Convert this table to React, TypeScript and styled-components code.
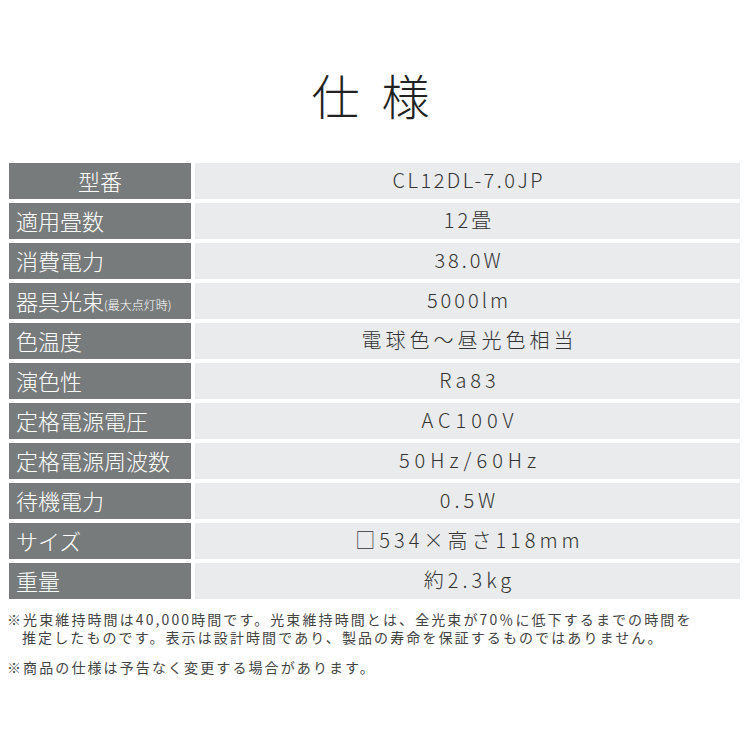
import React from "react";
import styled, { createGlobalStyle } from "styled-components";

const Global = createGlobalStyle`
  html, body { margin: 0; padding: 0; background: #fff; }
  body { font-family: "Noto Sans CJK JP", "Noto Sans", sans-serif; }
`;

const Page = styled.div`
  width: 750px;
  height: 750px;
  box-sizing: border-box;
  padding: 0 10px 0 9px;
  display: flex;
  flex-direction: column;
`;

const Title = styled.h1`
  margin: 0;
  height: 163px;
  box-sizing: border-box;
  padding-top: 62px;
  padding-left: 14px;
  text-align: center;
  font-size: 48px;
  line-height: 64px;
  font-weight: 300;
  letter-spacing: 22px;
  color: #222;
`;

const Table = styled.div`
  display: grid;
  grid-template-columns: 182px 1fr;
  column-gap: 4px;
  row-gap: 4px;
  grid-auto-rows: 36px;
`;

const Label = styled.div<{ $center?: boolean }>`
  background: #787b7c;
  color: #fff;
  font-size: 22px;
  font-weight: 300;
  line-height: 34px;
  padding-bottom: 2px;
  padding-left: ${(p) => (p.$center ? "0" : "7px")};
  text-align: ${(p) => (p.$center ? "center" : "left")};
  white-space: nowrap;
  overflow: hidden;
`;

const Small = styled.span`
  font-size: 12px;
`;

const Value = styled.div<{ $ls: number }>`
  background: #e9ebec;
  color: #333;
  font-size: 20px;
  font-weight: 300;
  line-height: 34px;
  padding-bottom: 2px;
  text-align: center;
  letter-spacing: ${(p) => p.$ls}px;
  padding-left: ${(p) => p.$ls}px;
  white-space: nowrap;
`;

const Notes = styled.div`
  margin-top: 11px;
  color: #444;
  font-size: 14px;
  letter-spacing: 2.1px;
  line-height: 18px;
  margin-left: -2px;
`;

const Note = styled.p<{ $gap?: number }>`
  margin: 0;
  margin-top: ${(p) => p.$gap ?? 0}px;
  white-space: nowrap;
`;

const Indent = styled.span`
  display: inline-block;
  padding-left: 15px;
`;

const rows: { label: React.ReactNode; value: string; ls: number; center?: boolean }[] = [
  { label: "型番", value: "CL12DL-7.0JP", ls: 2.5, center: true },
  { label: "適用畳数", value: "12畳", ls: 3 },
  { label: "消費電力", value: "38.0W", ls: 3 },
  {
    label: (
      <>
        器具光束<Small>(最大点灯時)</Small>
      </>
    ),
    value: "5000lm",
    ls: 3,
  },
  { label: "色温度", value: "電球色～昼光色相当", ls: 4 },
  { label: "演色性", value: "Ra83", ls: 4 },
  { label: "定格電源電圧", value: "AC100V", ls: 5 },
  { label: "定格電源周波数", value: "50Hz/60Hz", ls: 5 },
  { label: "待機電力", value: "0.5W", ls: 4 },
  { label: "サイズ", value: "□534×高さ118mm", ls: 4 },
  { label: "重量", value: "約2.3kg", ls: 4 },
];

export default function App() {
  return (
    <Page>
      <Global />
      <Title>仕様</Title>
      <Table>
        {rows.map((r, i) => (
          <React.Fragment key={i}>
            <Label $center={r.center}>{r.label}</Label>
            <Value $ls={r.ls}>{r.value}</Value>
          </React.Fragment>
        ))}
      </Table>
      <Notes>
        <Note>※光束維持時間は40,000時間です。光束維持時間とは、全光束が70％に低下するまでの時間を</Note>
        <Note>
          <Indent>推定したものです。表示は設計時間であり、製品の寿命を保証するものではありません。</Indent>
        </Note>
        <Note $gap={12}>※商品の仕様は予告なく変更する場合があります。</Note>
      </Notes>
    </Page>
  );
}
